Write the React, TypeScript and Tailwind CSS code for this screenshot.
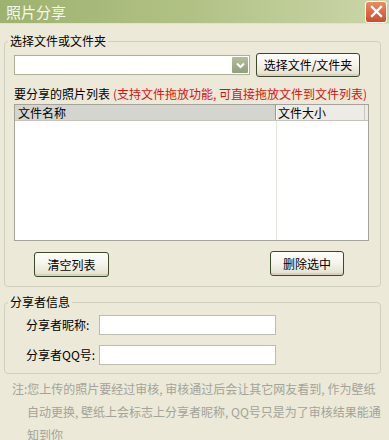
import React from "react";

const font = { fontFamily: '"Noto Sans CJK SC", "Liberation Sans", sans-serif' };

function XpButton({ children, className = "" }: { children: React.ReactNode; className?: string }) {
  return (
    <button
      className={
        "flex items-center justify-center rounded-[3px] border border-[#3c4a2c] bg-gradient-to-b from-[#fefefb] via-[#f5f3ea] to-[#e2dfcc] text-[12px] leading-[16px] text-black shadow-[inset_0_-2px_0_#d6d2bd] " +
        className
      }
    >
      {children}
    </button>
  );
}

function TextBox() {
  return <div className="h-[20px] w-[177px] border border-[#bdbdb0] bg-white" />;
}

export default function App() {
  return (
    <div className="w-[389px] h-[440px] overflow-hidden bg-[#ece9d8] text-[12px] leading-[16px] text-black" style={font}>
      {/* Title bar */}
      <div className="flex h-[24px] items-center justify-between border-b border-[#dfe3c9] bg-gradient-to-r from-[#9eb26f] via-[#b2c286] to-[#cbd6a9] pl-[6px] pr-[2px]">
        <span className="text-[15px] leading-[20px] text-[#f6f8ee]">照片分享</span>
        <div className="flex h-[22px] w-[22px] items-center justify-center rounded-[3px] border border-white bg-gradient-to-b from-[#ec8a64] to-[#cc4a2a]">
          <svg width="13" height="13" viewBox="0 0 13 13">
            <path d="M2 2 L11 11 M11 2 L2 11" stroke="white" strokeWidth="2.4" strokeLinecap="square" />
          </svg>
        </div>
      </div>

      {/* Select files group */}
      <fieldset className="mx-[4px] mt-[9px] w-[377px] rounded-[4px] border border-[#d0d0bf] pb-[9px] pl-[9px]">
        <legend className="-ml-[6px] px-[2px]">选择文件或文件夹</legend>
        <div className="mt-[4px] flex items-center gap-[6px]">
          <div className="flex h-[20px] w-[236px] items-center justify-end border border-[#a9b096] bg-white pr-[1px]">
            <div className="flex h-[16px] w-[16px] items-center justify-center rounded-[1px] bg-gradient-to-b from-[#b4bd9e] to-[#939d7d]">
              <svg width="9" height="7" viewBox="0 0 9 7">
                <path d="M1 1.5 L4.5 5 L8 1.5" stroke="white" strokeWidth="2" fill="none" />
              </svg>
            </div>
          </div>
          <XpButton className="h-[24px] w-[104px]">选择文件/文件夹</XpButton>
        </div>

        <div className="mt-[9px] flex gap-[3px]">
          <span>要分享的照片列表</span>
          <span className="text-[#dc1010]">(支持文件拖放功能,&nbsp;可直接拖放文件到文件列表)</span>
        </div>

        <div className="mt-[2px] flex h-[137px] w-[355px] flex-col border border-[#a3a39a] bg-white">
          <div className="flex h-[16px] border-b border-[#c4c4bc]">
            <div className="flex w-[261px] items-center border-r border-[#9d9d96] bg-[#d5d5d0] pl-[3px]">文件名称</div>
            <div className="flex w-[89px] items-center border-l border-white border-r border-r-[#c8c8c0] bg-[#ecebe5] pl-[1px]">文件大小</div>
            <div className="flex-1 bg-[#ecebe5]" />
          </div>
          <div className="flex flex-1">
            <div className="w-[262px] border-r border-[#e6e6e0]" />
          </div>
        </div>

        <div className="mt-[10px] flex items-start">
          <XpButton className="ml-[20px] mt-[1px] h-[25px] w-[75px]">清空列表</XpButton>
          <XpButton className="ml-[161px] h-[25px] w-[74px]">删除选中</XpButton>
        </div>
      </fieldset>

      {/* Sharer info group */}
      <fieldset className="mx-[4px] mt-[7px] w-[377px] rounded-[4px] border border-[#d0d0bf] pb-[8px]">
        <legend className="ml-[3px] px-[2px]">分享者信息</legend>
        <div className="mt-[5px] flex items-center pl-[21px]">
          <span className="w-[73px]">分享者昵称:</span>
          <TextBox />
        </div>
        <div className="mt-[10px] flex items-center pl-[21px]">
          <span className="w-[73px]">分享者QQ号:</span>
          <TextBox />
        </div>
      </fieldset>

      {/* Note */}
      <p className="mt-[3px] pl-[27px] -indent-[15px] text-[12px] leading-[23px] text-[#a3a39a]">
        注:您上传的照片要经过审核,&nbsp;审核通过后会让其它网友看到,&nbsp;作为壁纸
        <br />
        自动更换,&nbsp;壁纸上会标志上分享者昵称,&nbsp;QQ号只是为了审核结果能通
        <br />
        知到你
      </p>
    </div>
  );
}
